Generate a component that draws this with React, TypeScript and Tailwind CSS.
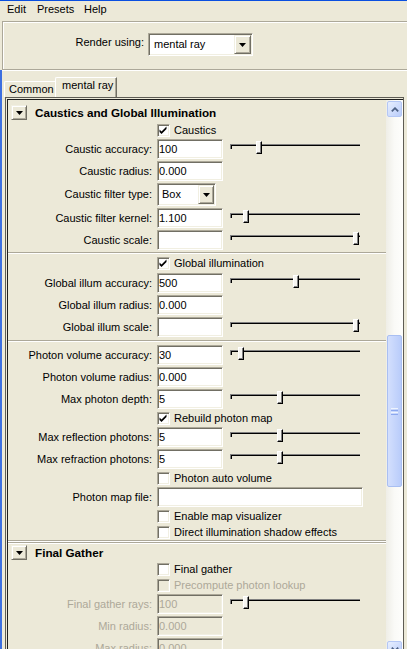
import React from "react"

type Row =
  | { t: "head"; label: string; mt: string }
  | { t: "check"; label: string; on?: boolean; off?: boolean; mt: string }
  | { t: "field"; label: string; value?: string; slider?: number; off?: boolean; wide?: boolean; mt: string }
  | { t: "select"; label: string; value: string; mt: string }
  | { t: "sep"; mt: string }
  | { t: "dsep"; mt: string }

const ROWS: Row[] = [
  { t: "head", label: "Caustics and Global Illumination", mt: "mt-0" },
  { t: "check", label: "Caustics", on: true, mt: "mt-[2px]" },
  { t: "field", label: "Caustic accuracy:", value: "100", slider: 26, mt: "mt-[2px]" },
  { t: "field", label: "Caustic radius:", value: "0.000", mt: "mt-[2px]" },
  { t: "select", label: "Caustic filter type:", value: "Box", mt: "mt-[2px]" },
  { t: "field", label: "Caustic filter kernel:", value: "1.100", slider: 13, mt: "mt-[2px]" },
  { t: "field", label: "Caustic scale:", value: "", slider: 123, mt: "mt-[2px]" },
  { t: "sep", mt: "mt-[2px]" },
  { t: "check", label: "Global illumination", on: true, mt: "mt-[2px]" },
  { t: "field", label: "Global illum accuracy:", value: "500", slider: 63, mt: "mt-[3px]" },
  { t: "field", label: "Global illum radius:", value: "0.000", mt: "mt-[2px]" },
  { t: "field", label: "Global illum scale:", value: "", slider: 123, mt: "mt-[2px]" },
  { t: "sep", mt: "mt-[3px]" },
  { t: "field", label: "Photon volume accuracy:", value: "30", slider: 8, mt: "mt-[3px]" },
  { t: "field", label: "Photon volume radius:", value: "0.000", mt: "mt-[2px]" },
  { t: "field", label: "Max photon depth:", value: "5", slider: 47, mt: "mt-[2px]" },
  { t: "check", label: "Rebuild photon map", on: true, mt: "mt-[2px]" },
  { t: "field", label: "Max reflection photons:", value: "5", slider: 47, mt: "mt-[2px]" },
  { t: "field", label: "Max refraction photons:", value: "5", slider: 47, mt: "mt-[2px]" },
  { t: "check", label: "Photon auto volume", mt: "mt-[2px]" },
  { t: "field", label: "Photon map file:", value: "", wide: true, mt: "mt-[2px]" },
  { t: "check", label: "Enable map visualizer", mt: "mt-[2px]" },
  { t: "check", label: "Direct illumination shadow effects", mt: "mt-[2px]" },
  { t: "dsep", mt: "mt-[1px]" },
  { t: "head", label: "Final Gather", mt: "mt-0" },
  { t: "check", label: "Final gather", mt: "mt-[1px]" },
  { t: "check", label: "Precompute photon lookup", off: true, mt: "mt-[2px]" },
  { t: "field", label: "Final gather rays:", value: "100", slider: 13, off: true, mt: "mt-[2px]" },
  { t: "field", label: "Min radius:", value: "0.000", off: true, mt: "mt-[2px]" },
  { t: "field", label: "Max radius:", value: "0.000", off: true, mt: "mt-[2px]" },
]

// classic 3d frames
const sunken =
  "border border-t-[#ACA899] border-l-[#ACA899] border-r-white border-b-white shadow-[inset_1px_1px_0_#716F64,inset_-1px_-1px_0_#F1EFE2]"
const raised =
  "border border-t-[#F1EFE2] border-l-[#F1EFE2] border-r-[#716F64] border-b-[#716F64] shadow-[inset_1px_1px_0_#fff,inset_-1px_-1px_0_#ACA899]"

const Arrow = () => (
  <svg width="7" height="4" viewBox="0 0 7 4">
    <path d="M0 0h7L3.5 4z" fill="#000" />
  </svg>
)

const Checkbox = ({ on, off }: { on?: boolean; off?: boolean }) => (
  <div className={`relative h-[13px] w-[13px] shrink-0 ${sunken} ${off ? "bg-[#ECE9D8]" : "bg-white"}`}>
    {on && (
      <svg className="absolute left-0 top-0" width="11" height="11" viewBox="0 0 11 11">
        <path d="M1.5 4.5 L3.5 6.5 L8.5 1.5 L8.5 4 L3.5 9 L1.5 7 Z" fill="#000" />
      </svg>
    )}
  </div>
)

const Slider = ({ pos }: { pos: number }) => (
  <div className="relative ml-[7px] h-[20px] w-[130px]">
    <div className="absolute left-0 right-0 top-[5px] h-[5px] border-l border-t border-[#808080] shadow-[inset_1px_1px_0_#000]" />
    <div
      className="absolute top-[2px] h-[13px] w-[6px] border border-l-white border-t-white border-r-black border-b-black bg-[#F7F6F1] shadow-[inset_-1px_-1px_0_#808080]"
      style={{ left: pos }}
    />
  </div>
)

const Label = ({ text, off }: { text: string; off?: boolean }) => (
  <div className={`w-[144px] shrink-0 text-right ${off ? "text-[#ACA899]" : ""}`}>{text}</div>
)

const RowView = ({ row }: { row: Row }) => {
  if (row.t === "sep") {
    return <div className={`${row.mt} h-[2px] border-t border-b border-t-[#ACA899] border-b-white`} />
  }
  if (row.t === "dsep") {
    return (
      <div className={`${row.mt} flex flex-col`}>
        <div className="h-[2px] border-t border-b border-t-[#ACA899] border-b-white" />
        <div className="h-[2px] border-t border-b border-t-[#ACA899] border-b-white" />
      </div>
    )
  }
  if (row.t === "head") {
    return (
      <div className={`${row.mt} flex h-[17px] items-start pl-[3px]`}>
        <div className={`mt-[1px] flex h-[15px] w-[16px] items-center justify-center bg-[#ECE9D8] ${raised}`}>
          <Arrow />
        </div>
        <div className="ml-[8px] mt-[1px] text-[11.7px] font-bold leading-[15px]">{row.label}</div>
      </div>
    )
  }
  if (row.t === "check") {
    return (
      <div className={`${row.mt} flex h-[14px] items-center pl-[149px]`}>
        <Checkbox on={row.on} off={row.off} />
        <span className={`ml-[4px] whitespace-nowrap ${row.off ? "text-[#ACA899]" : ""}`}>{row.label}</span>
      </div>
    )
  }
  if (row.t === "select") {
    return (
      <div className={`${row.mt} flex h-[23px] items-center`}>
        <Label text={row.label} />
        <div className={`ml-[5px] flex h-[23px] w-[59px] bg-white ${sunken}`}>
          <div className="flex-1 pl-[4px] leading-[21px]">{row.value}</div>
          <div className={`m-[1px] flex w-[16px] items-center justify-center bg-[#ECE9D8] ${raised}`}>
            <Arrow />
          </div>
        </div>
      </div>
    )
  }
  return (
    <div className={`${row.mt} flex h-[20px] items-center`}>
      <Label text={row.label} off={row.off} />
      <div
        className={`ml-[5px] h-[20px] shrink-0 pl-[1px] leading-[18px] ${row.wide ? "w-[206px]" : "w-[66px]"} ${sunken} ${
          row.off ? "bg-[#ECE9D8] text-[#ACA899]" : "bg-white"
        }`}
      >
        {row.value}
      </div>
      {row.slider !== undefined && <Slider pos={row.slider} />}
    </div>
  )
}

const ScrollButton = ({ up }: { up?: boolean }) => (
  <div className="mx-[1px] flex h-[16px] items-center justify-center rounded-[2px] border border-[#B4C7F5] bg-gradient-to-br from-[#E8EFFE] to-[#B9CCFA]">
    <svg width="8" height="5" viewBox="0 0 8 5">
      <path d={up ? "M0.8 4.3L4 1.2 7.2 4.3" : "M0.8 0.7L4 3.8 7.2 0.7"} stroke="#4D6185" strokeWidth="1.8" fill="none" />
    </svg>
  </div>
)

const Scrollbar = () => (
  <div className="flex w-[17px] shrink-0 flex-col bg-gradient-to-r from-[#EFEEE7] via-[#FAFAF7] to-[#FEFEFC] pt-[1px] pb-[1px]">
    <ScrollButton up />
    <div className="h-[218px]" />
    <div className="mx-[1px] flex h-[152px] items-center justify-center rounded-[2px] border border-[#A9BFF2] bg-gradient-to-r from-[#D3DFFD] to-[#B9CCFA]">
      <div className="flex w-[7px] flex-col gap-[1px]">
        <div className="h-[1px] bg-[#EEF4FE]" />
        <div className="h-[1px] bg-[#8CA8EE]" />
        <div className="h-[1px] bg-[#EEF4FE]" />
        <div className="h-[1px] bg-[#8CA8EE]" />
      </div>
    </div>
    <div className="flex-1" />
    <ScrollButton />
  </div>
)

export default function App() {
  return (
    <div className="flex h-[649px] w-[407px] flex-col overflow-hidden border-t border-[#0A4FE0] bg-[#ECE9D8] font-['Liberation_Sans',Arial,sans-serif] text-[11px] leading-[13px] text-black">
      {/* menu bar */}
      <div className="flex h-[20px] shrink-0 pl-[7px] pt-[2px]">
        <span className="w-[30px]">Edit</span>
        <span className="w-[47px]">Presets</span>
        <span>Help</span>
      </div>

      {/* renderer */}
      <div className="ml-[2px] flex h-[49px] shrink-0 items-start border-t border-b border-l border-[#ACA899] pt-[11px] shadow-[inset_1px_1px_0_#fff,0_1px_0_#fff]">
        <div className="mt-[3px] w-[141px] text-right">Render using:</div>
        <div className={`ml-[4px] flex h-[23px] w-[105px] bg-white ${sunken}`}>
          <div className="flex-1 pl-[5px] leading-[21px]">mental ray</div>
          <div className={`m-[1px] flex w-[17px] items-center justify-center bg-[#ECE9D8] ${raised}`}>
            <Arrow />
          </div>
        </div>
      </div>

      <div className="flex flex-1 flex-col border-l-2 border-[#3D6FE0]">
        {/* tabs */}
        <div className="mt-[1px] flex h-[26px] shrink-0 items-end pl-[2px]">
          <div className="h-[16px] w-[51px] whitespace-nowrap rounded-tl-[2px] border-l border-t border-white pl-[4px] pt-[1px]">
            Common
          </div>
          <div className="h-[20px] w-[62px] whitespace-nowrap rounded-tl-[2px] border-l border-t border-r border-l-white border-t-white border-r-[#716F64] pl-[6px] pt-[1px] shadow-[inset_-1px_0_0_#ACA899]">
            mental ray
          </div>
        </div>

        {/* panel */}
        <div className="ml-[3px] flex w-[399px] flex-1 flex-col border border-[#5E5C54]">
          <div className="flex flex-1 flex-col pl-[1px] pt-[1px]">
            <div className="flex flex-1 border-l border-t border-[#1E1E1E]">
              <div className="flex-1 overflow-hidden pt-[4px]">
                {ROWS.map((r, i) => (
                  <RowView key={i} row={r} />
                ))}
              </div>
              <Scrollbar />
            </div>
          </div>
        </div>
      </div>
    </div>
  )
}
